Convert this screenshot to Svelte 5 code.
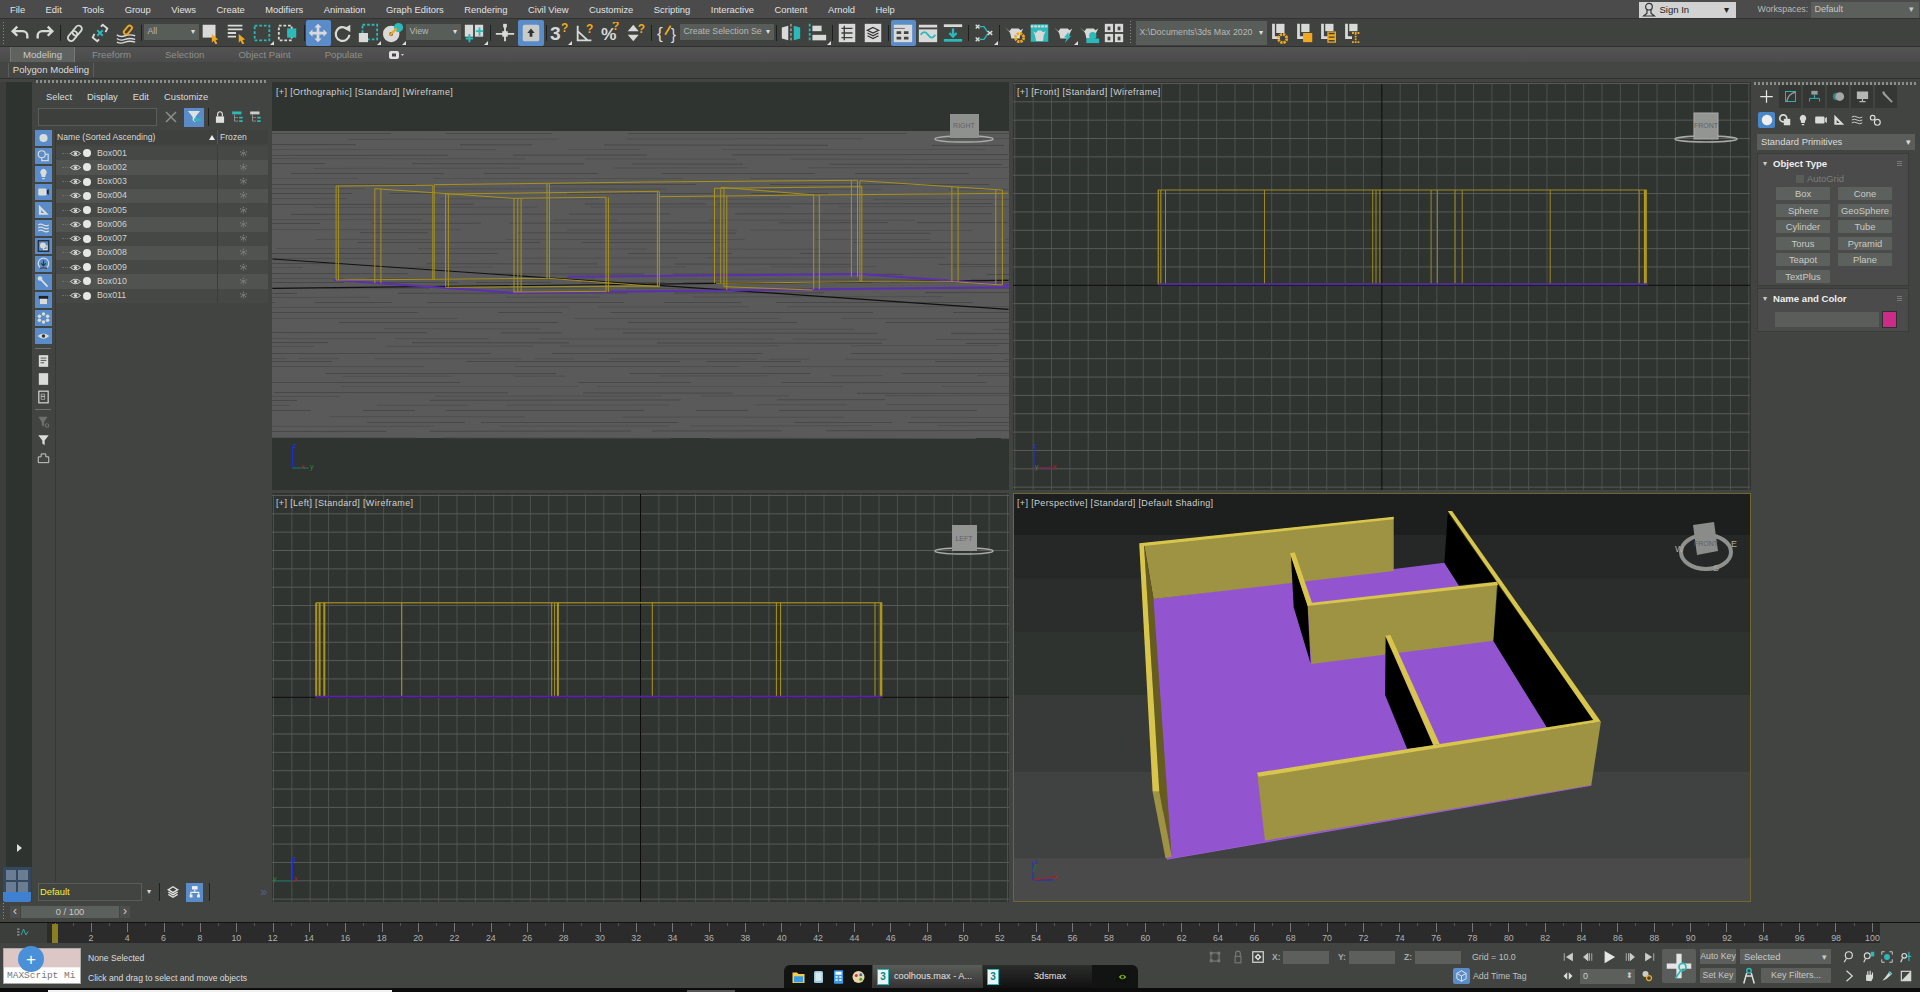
<script>
const L = '#d9d9d9', T = '#2bb9b9', O = '#f0a81e', D = '#414441';
const cursor = (x = 0, y = 0) => `<path transform="translate(${x} ${y})" d="M13 12l7 6-3 .5 2 4-2 1-2-4-2 2z" fill="${O}"/>`;
const q = (x, y) => `<text x="${x}" y="${y}" font-family="Liberation Sans" font-size="13" font-weight="700" fill="${O}">?</text>`;
const gear = (x, y) => `<circle cx="${x}" cy="${y}" r="4.500" fill="none" stroke="${O}" stroke-width="3" stroke-dasharray="2.500 1"/>`;
const potShape = `<path d="M1 6l5 4 2-3h8l2 2 3-2-3 6-1 5H8l-1-5-1-2z" fill="${L}"/>`;
const icons = {
  undo: `<path d="M9 5L4 10l5 5M4 10h11a5 5 0 0 1 5 5v3" fill="none" stroke="${L}" stroke-width="2.600"/>`,
  redo: `<path d="M15 5l5 5-5 5M20 10H9a5 5 0 0 0-5 5v3" fill="none" stroke="${L}" stroke-width="2.600"/>`,
  link: `<g fill="none" stroke="${L}" stroke-width="2"><rect x="11" y="3" width="7" height="12" rx="3.500" transform="rotate(40 14 9)"/><rect x="6" y="9" width="7" height="12" rx="3.500" transform="rotate(40 9 15)"/></g>`,
  unlink: `<g fill="none" stroke="${L}" stroke-width="2"><path d="M13 5l2-2 5 4-2 4M11 19l-2 2-5-4 2-4"/></g><path d="M9 9l6 6M15 9l-6 6" stroke="${T}" stroke-width="2"/>`,
  bind: `<path d="M2 14q4 3 9 1t11 0M2 18q4 3 9 1t11 0M2 22q4 2 9 0t11 0" fill="none" stroke="${L}" stroke-width="1.500"/><rect x="12" y="3" width="5" height="11" rx="2.500" transform="rotate(40 14 8)" fill="none" stroke="${O}" stroke-width="2"/>`,
  select: `<rect x="4" y="3" width="14" height="14" fill="${L}"/>${cursor(1, 1)}`,
  byname: `<path d="M3 4h16M3 8h16M3 12h9M3 16h9" stroke="${L}" stroke-width="2"/>${cursor(2, 1)}`,
  region: `<rect x="4" y="4" width="16" height="16" fill="none" stroke="${T}" stroke-width="2" stroke-dasharray="3 2"/>`,
  window: `<rect x="2" y="4" width="14" height="16" fill="none" stroke="${L}" stroke-width="2" stroke-dasharray="3 2"/><rect x="11" y="7" width="10" height="10" fill="${T}"/>`,
  move: `<path d="M12 2l4 4h-2.500v4.500H18V8l4 4-4 4v-2.500h-4.500V18H16l-4 4-4-4h2.500v-4.500H6V16l-4-4 4-4v2.500h4.500V6H8z" fill="${L}"/>`,
  rotate: `<path d="M17 8a7.500 7.500 0 1 0 2 6" fill="none" stroke="${L}" stroke-width="2.400"/><path d="M13 7l7-4v8z" fill="${L}"/>`,
  scale: `<rect x="6" y="3" width="16" height="16" fill="none" stroke="${T}" stroke-width="2" stroke-dasharray="3 2"/><rect x="2" y="12" width="10" height="10" fill="${L}"/>`,
  place: `<circle cx="10" cy="13" r="9" fill="${L}"/><circle cx="10" cy="13" r="2" fill="${D}"/><circle cx="18" cy="6" r="5" fill="${T}"/><path d="M8 15l8-8" stroke="${O}" stroke-width="2.500"/>`,
  pivot: `<rect x="2" y="3" width="9" height="13" fill="${L}"/><rect x="13" y="3" width="9" height="13" fill="${L}"/><path d="M7 13v9M3 18h8M18 6v9M14 10h8" stroke="${T}" stroke-width="2"/>`,
  manip: `<path d="M12 3v18M2 13h20" stroke="${L}" stroke-width="2"/><rect x="10" y="2" width="4" height="4" fill="${L}"/><rect x="9" y="10" width="6" height="6" fill="${L}"/>`,
  keymode: `<rect x="3" y="3" width="18" height="18" rx="2" fill="#c9cbc9"/><path d="M12 7l4 5h-2.500v4h-3v-4H8z" fill="#333"/>`,
  snap3: `<text x="1" y="20" font-family="Liberation Sans" font-size="21" font-weight="700" fill="${L}">3</text>${q(13, 11)}`,
  angle: `<path d="M4 4v16h15M4 10l11 10" fill="none" stroke="${L}" stroke-width="2"/>${q(13, 12)}`,
  percent: `<text x="1" y="20" font-family="Liberation Sans" font-size="19" font-weight="700" fill="${L}">%</text>${q(13, 9)}`,
  spin: `<path d="M9 3l6 7H3zM9 21l6-7H3z" fill="${L}"/>${q(14, 12)}`,
  braces: `<text x="1" y="19" font-family="Liberation Sans" font-size="19" fill="${L}">{</text><text x="16" y="20" font-family="Liberation Sans" font-size="17" fill="${L}">}</text><path d="M10 14l6-10" stroke="${O}" stroke-width="2"/>`,
  mirror: `<path d="M2 6l7-2v16l-7-2z" fill="${L}"/><path d="M22 6l-7-2v16l7-2z" fill="${T}"/><path d="M12 2v20" stroke="${L}" stroke-dasharray="3 2"/>`,
  align: `<path d="M4 2v20" stroke="${T}" stroke-width="2" stroke-dasharray="3 2"/><rect x="7" y="4" width="10" height="6" fill="${L}"/><rect x="7" y="14" width="15" height="6" fill="${L}"/>`,
  layer: `<rect x="3" y="2" width="18" height="20" fill="${L}"/><path d="M6 7h12M6 12h12M6 17h12M9 4v16" stroke="#3a3d3a" stroke-width="1.500"/>`,
  ribbon: `<rect x="3" y="2" width="18" height="20" fill="${L}"/><path d="M12 6l6 3-6 3-6-3zM6 12l6 3 6-3M6 15l6 3 6-3" fill="none" stroke="#333" stroke-width="1.500"/>`,
  curve: `<rect x="2" y="3" width="20" height="19" fill="${L}"/><path d="M2 7h12" stroke="#666"/><path d="M5 10h5v3H5zM13 10h5v3h-5zM5 16h5v3H5zM13 16h5v3h-5z" fill="#444"/>`,
  dope: `<rect x="2" y="3" width="20" height="19" fill="${L}"/><path d="M2 7h20" stroke="#444" stroke-width="2"/><path d="M4 14q4-6 8 0t8 0" fill="none" stroke="${T}" stroke-width="2"/>`,
  down: `<path d="M2 4h20" stroke="${L}" stroke-width="3"/><path d="M2 20h20" stroke="${T}" stroke-width="3"/><path d="M12 7v8M8 12l4 4 4-4" stroke="${T}" stroke-width="2.500" fill="none"/>`,
  schem: `<path d="M7 5h5l4 6M7 19h5l4-6" fill="none" stroke="${T}" stroke-width="1.500"/><path d="M3 3l4 4M7 3l-4 4M3 17l4 4M7 17l-4 4M16 10l5 4M21 10l-5 4" stroke="${L}" stroke-width="1.600"/>`,
  pot: `${potShape}${gear(17, 17)}`,
  potblue: `<rect x="2" y="2" width="20" height="20" fill="${T}"/><path d="M2 4.500h20" stroke="${L}" stroke-width="2.500" stroke-dasharray="3 1"/><path d="M5 10l3 2 2-3h4l2 2 3-1-2 4-1 7H8l-1-6z" fill="${L}"/>`,
  potz: `${potShape}<path d="M17 11l-5 6h3l-2 6 7-8h-3z" fill="${T}"/>`,
  pott: `${potShape}<path d="M8 18h14v5H8z" fill="${T}"/><circle cx="15" cy="15" r="4" fill="${T}"/>`,
  quad: `<g fill="${L}"><rect x="2" y="2" width="9" height="9"/><rect x="13" y="2" width="9" height="9"/><rect x="2" y="13" width="9" height="9"/><rect x="13" y="13" width="9" height="9"/></g><g fill="#444"><rect x="5" y="5" width="3" height="4"/><rect x="16" y="5" width="3" height="4"/><rect x="5" y="16" width="3" height="4"/><rect x="16" y="16" width="3" height="4"/></g>`,
  p1: `<path d="M6 2v15h7" fill="none" stroke="${L}" stroke-width="3"/><rect x="9" y="2" width="9" height="10" fill="${L}"/>${gear(16, 18)}`,
  p2: `<path d="M6 2v15h6" fill="none" stroke="${L}" stroke-width="3"/><rect x="9" y="2" width="9" height="9" fill="${L}"/><rect x="11" y="12" width="10" height="10" fill="${O}"/>`,
  p3: `<path d="M6 2v15h6" fill="none" stroke="${L}" stroke-width="3"/><rect x="9" y="2" width="9" height="8" fill="${L}"/><path d="M12 11h8v3h-8zM12 15h8v3h-8zM12 19h8v3h-8z" fill="none" stroke="${O}" stroke-width="1.500"/>`,
  p4: `<path d="M6 2v15h6" fill="none" stroke="${L}" stroke-width="3"/><rect x="9" y="2" width="9" height="8" fill="${L}"/><path d="M12 12h8M16 12v10M12 22h8" fill="none" stroke="${O}" stroke-width="2" stroke-dasharray="2 1"/>`
};
const tools = [
  ['undo', 25], ['redo', 25], ['sep', 5], ['link', 25], ['unlink', 25], ['bind', 27], ['sep', 4],
  ['combo', 55, 'All'], ['select', 23], ['byname', 29], ['region', 23, '', 1], ['window', 29], ['sep', 3],
  ['move', 25, '', 0, 1], ['rotate', 25], ['scale', 25, '', 1], ['place', 25, '', 1], ['combo', 55, 'View'],
  ['pivot', 27, '', 1], ['sep', 5], ['manip', 25], ['keymode', 26, '', 0, 1], ['sep', 5], ['snap3', 23, '', 1],
  ['angle', 27], ['percent', 25], ['spin', 25], ['sep', 5], ['braces', 26], ['combo', 94, 'Create Selection Se'],
  ['sep', 5], ['mirror', 25], ['align', 27, '', 1], ['sep', 4], ['layer', 25], ['ribbon', 27], ['sep', 4],
  ['curve', 25, '', 0, 1], ['dope', 25], ['down', 25], ['sep', 5], ['schem', 27, '', 1], ['sep', 3], ['pot', 28],
  ['potblue', 21], ['potz', 28, '', 1], ['pott', 25], ['quad', 23], ['grip', 10],
  ['combo', 131, 'X:\\Documents\\3ds Max 2020'], ['p1', 25], ['p2', 24], ['p3', 24], ['p4', 25]
];
const menus = ['File', 'Edit', 'Tools', 'Group', 'Views', 'Create', 'Modifiers', 'Animation', 'Graph Editors', 'Rendering', 'Civil View', 'Customize', 'Scripting', 'Interactive', 'Content', 'Arnold', 'Help'];
const tabs = ['Freeform', 'Selection', 'Object Paint', 'Populate'];
const boxes = Array.from({ length: 11 }, (_, i) => 'Box' + String(i + 1).padStart(3, '0'));

const E = '#d9dcd9';
const side = [
  `<circle cx="12" cy="12" r="7" fill="${E}"/>`,
  `<rect x="9" y="9" width="11" height="11" fill="none" stroke="${E}" stroke-width="2"/><circle cx="9" cy="9" r="6" fill="#5a8cca" stroke="${E}" stroke-width="2"/>`,
  `<path d="M12 3a6 6 0 0 1 4 10l-1 4H9l-1-4a6 6 0 0 1 4-10zM10 19h4v2h-4z" fill="${E}"/>`,
  `<rect x="3" y="6" width="14" height="12" rx="2" fill="${E}"/><path d="M18 9l3-2v10l-3-2z" fill="#222"/>`,
  `<path d="M4 3l17 17H4zM8 12v5h5z" fill="${E}" fill-rule="evenodd"/>`,
  `<path d="M3 7q4-3 9 0t9 0M3 12q4-3 9 0t9 0M3 17q4-3 9 0t9 0" stroke="${E}" stroke-width="2" fill="none"/>`,
  `<rect x="3" y="3" width="18" height="18" fill="none" stroke="#222" stroke-width="2"/><circle cx="11" cy="11" r="5" fill="${E}"/><rect x="12" y="12" width="6" height="6" fill="none" stroke="${E}" stroke-width="2"/>`,
  `<circle cx="12" cy="11" r="9" fill="none" stroke="${E}" stroke-width="2"/><path d="M12 6v8M8 11l4 4 4-4" stroke="#143" stroke-width="2" fill="none"/><path d="M6 19h12" stroke="#222" stroke-width="2"/>`,
  `<path d="M5 5l14 15" stroke="${E}" stroke-width="3"/><circle cx="6" cy="6" r="4" fill="${E}"/>`,
  `<rect x="4" y="5" width="16" height="5" fill="#222"/><rect x="6" y="10" width="12" height="9" fill="${E}"/>`,
  `<g fill="${E}"><circle cx="12" cy="5" r="3"/><circle cx="12" cy="19" r="3"/><circle cx="5" cy="9" r="3"/><circle cx="19" cy="9" r="3"/><circle cx="5" cy="16" r="3"/><circle cx="19" cy="16" r="3"/></g>`,
  `<path d="M2 12q10-9 20 0q-10 9-20 0z" fill="${E}"/><circle cx="12" cy="12" r="3" fill="#333"/>`
];
const sidePlain = [
  `<rect x="4" y="2" width="16" height="20" fill="${E}"/><path d="M7 7h10M7 11h10M7 15h6" stroke="#444" stroke-width="1.500"/>`,
  `<rect x="4" y="2" width="16" height="20" fill="${E}"/>`,
  `<rect x="4" y="2" width="16" height="20" fill="none" stroke="${E}" stroke-width="2"/><path d="M8 7h6v4H8zM8 11h6v5H8z" fill="none" stroke="${E}"/>`
];
const sideFilter = [
  `<path d="M3 3h16l-6 9v8l-4-3v-5z" fill="#6d716d"/><circle cx="18" cy="18" r="3" fill="none" stroke="#6d716d" stroke-width="2"/>`,
  `<path d="M3 4h18l-7 9v8l-4-3v-5z" fill="${E}"/>`,
  `<path d="M3 10h5V5h8v5h5v10H3z" fill="none" stroke="${E}" stroke-width="1.500"/>`
];
const cmdTabs = [
  `<path d="M12 2v20M2 12h20" stroke="#e8e8e8" stroke-width="2"/>`,
  `<rect x="4" y="4" width="16" height="16" fill="none" stroke="${T}" stroke-width="1.500"/><path d="M6 20Q8 8 20 5" fill="none" stroke="#9a9d9a" stroke-width="2"/>`,
  `<rect x="7" y="3" width="10" height="6" fill="#9a9d9a"/><path d="M4 20v-5h16v5M12 9v6" fill="none" stroke="${T}" stroke-width="1.500"/>`,
  `<circle cx="9" cy="12" r="6" fill="${T}" opacity=".6"/><circle cx="14" cy="12" r="7" fill="#a4a7a4"/>`,
  `<rect x="3" y="4" width="18" height="12" fill="#b4b7b4"/><path d="M12 16v3M7 20h10" stroke="#b4b7b4" stroke-width="2"/>`,
  `<path d="M5 5l3-2 2 4 12 13-2 2L7 9z" fill="#9a9d9a"/>`
];
const cmdSub = [
  `<circle cx="12" cy="12" r="9" fill="#eee"/>`,
  `<rect x="10" y="10" width="11" height="11" fill="${E}"/><circle cx="9" cy="9" r="6" fill="none" stroke="${E}" stroke-width="3"/>`,
  `<path d="M12 3a6 6 0 0 1 4 10l-1 4H9l-1-4a6 6 0 0 1 4-10zM10 19h4v2h-4z" fill="${E}"/>`,
  `<rect x="2" y="6" width="16" height="12" rx="2" fill="${E}"/><path d="M19 9l3-2v10l-3-2z" fill="${E}"/>`,
  `<path d="M4 3l17 17H4zM8 12v5h5z" fill="${E}" fill-rule="evenodd"/>`,
  `<path d="M3 7q4-3 9 0t9 0M3 12q4-3 9 0t9 0M3 17q4-3 9 0t9 0" stroke="${E}" stroke-width="1.500" fill="none"/>`,
  `<circle cx="8" cy="8" r="4" fill="none" stroke="${E}" stroke-width="2"/><circle cx="16" cy="16" r="5" fill="none" stroke="${E}" stroke-width="2"/>`
];
const primitives = ['Box', 'Cone', 'Sphere', 'GeoSphere', 'Cylinder', 'Tube', 'Torus', 'Pyramid', 'Teapot', 'Plane', 'TextPlus'];
const frames = Array.from({ length: 51 }, (_, i) => i * 2);
const frameTicks = Array.from({ length: 101 }, (_, i) => i);

function grid(cx, cy, x0, x1, y0, y1, s = 18.35) {
  const xs = [], ys = [];
  for (let v = cx % s + Math.floor((x0 - cx % s) / s) * s; v < x1; v += s) if (v >= x0 && Math.abs(v - cx) > 2) xs.push(v);
  for (let v = cy % s + Math.floor((y0 - cy % s) / s) * s; v < y1; v += s) if (v >= y0 && Math.abs(v - cy) > 2) ys.push(v);
  return { xs, ys };
}
const frontGrid = grid(1381.8, 285.3, 1013, 1751, 82, 490);
const leftGrid = grid(640.5, 697.3, 272, 1009, 493, 902);

const ox = (z) => +(270 + z / 2.119).toFixed(1), oy = (z) => +(80 + z / 3).toFixed(1);
const fx = (z) => +(1010 + z / 2.09).toFixed(1), fy = (z) => +(80 + z / 3).toFixed(1);
const py = (z) => +(490 + z / 3).toFixed(1);

const frontV = [310, 315, 325, 532, 758, 765, 773, 880, 893, 930, 945, 1129, 1315, 1327, 1330];
const leftV = [[98, 2], [105, 2], [115, 2], [279, 1], [597, 1], [603, 1], [610, 2], [810, 1], [1073, 1], [1082, 1], [1282, 1], [1295, 2.5]];

let seed = 7;
const rnd = () => ((seed = (seed * 16807) % 2147483647) / 2147483647);
const stripes = Array.from({ length: 62 }, (_, i) => ({
  y: Math.round(133 + i * 4.95 + rnd() * 2) + 0.5,
  dash: `${Math.round(40 + rnd() * 260)} ${Math.round(20 + rnd() * 120)} ${Math.round(60 + rnd() * 220)} ${Math.round(10 + rnd() * 90)}`,
  off: Math.round(rnd() * 300),
  tilt: Math.round(rnd() * 2 - 1),
  dark: i % 2 === 0
}));

const orthoV = [[140,319,600],[145,319,600],[222,326,610],[235,326,610],[345,316,600],[348,316,600],[372,342,620],[378,342,620],[517,355,636],[525,355,636],[532,355,636],[587,310,595],[592,310,595],[712,352,636],[717,352,636],[821,335,620],[825,335,620],[942,325,610],[955,325,610],[962,325,620],[968,348,630],[1152,345,628],[1164,345,628],[1232,302,590],[1245,302,590],[1250,302,605],[1254,320,605],[1445,320,605],[1458,320,605],[1538,330,615],[1552,330,615]];
const orthoL = [[140,318,345,316],[347,314,590,310],[590,310,800,306],[800,306,1245,301],[1250,302,1552,330],[372,342,825,334],[515,355,712,352],[825,350,1152,345],[942,325,1254,320],[955,322,1155,345],[1155,345,1565,340],[222,326,515,355],[140,600,590,595],[590,595,825,620],[372,622,825,618],[945,610,1250,605],[1250,605,1450,605],[1450,605,1552,615],[515,636,712,634],[962,620,1150,630]];
const orthoP = [[135,600,530,640],[530,638,1565,622],[630,590,1250,582],[1250,582,1565,615]];

const pts = (a) => a.map(([x, y]) => `${fx(x)},${py(y)}`).join(' ');
const persp = [
  { c: '#9355cf', p: [[298,327],[908,218],[1010,452],[1122,712],[1215,885],[535,1055],[328,1108],[325,1100]] },
  { c: '#9e9343', p: [[280,160],[802,82],[802,243],[300,327]] },
  { c: '#d8c64c', p: [[270,160],[802,80],[802,88],[280,168]] },
  { c: '#675c20', p: [[280,165],[300,327],[338,1100],[312,905]] },
  { c: '#d8c64c', p: [[270,160],[280,165],[312,905],[298,905]] },
  { c: '#9e9343', p: [[298,905],[312,905],[338,1100],[325,1105]] },
  { c: '#000', p: [[915,70],[908,218],[938,285],[1016,275]] },
  { c: '#000', p: [[1020,285],[1010,452],[1122,712],[1220,690]] },
  { c: '#d8c64c', p: [[915,63],[924,63],[1235,695],[1220,692]] },
  { c: '#9e9343', p: [[622,347],[1018,283],[1010,452],[630,522]] },
  { c: '#000', p: [[587,195],[593,352],[628,520],[622,347]] },
  { c: '#d8c64c', p: [[585,190],[595,187],[632,342],[622,347]] },
  { c: '#d8c64c', p: [[622,340],[1018,275],[1020,285],[622,348]] },
  { c: '#000', p: [[785,440],[784,615],[830,776],[885,767]] },
  { c: '#d8c64c', p: [[785,437],[795,435],[898,762],[885,765]] },
  { c: '#9e9343', p: [[517,855],[1235,695],[1215,885],[533,1052]] },
  { c: '#d8c64c', p: [[516,848],[1220,690],[1235,695],[520,860]] }
];
const bands = [[10,135,'#1c1f1d'],[135,265,'#252826'],[265,425,'#2a2d2b'],[425,615,'#2f3330'],[615,845,'#373a38'],[845,1105,'#404241'],[1105,1240,'#4a4a4a']];

const navTop = [
  `<circle cx="10" cy="9" r="6" fill="none" stroke="${L}" stroke-width="2"/><path d="M6 14l-4 7" stroke="${L}" stroke-width="2"/>`,
  `<circle cx="9" cy="10" r="5" fill="none" stroke="${L}" stroke-width="2"/><path d="M6 15l-3 6" stroke="${L}" stroke-width="2"/><path d="M15 3h6v8h-6z" fill="${T}"/>`,
  `<path d="M3 8V3h5M21 8V3h-5M3 16v5h5M21 16v5h-5" fill="none" stroke="${L}" stroke-width="1.500"/><circle cx="12" cy="12" r="5" fill="${T}"/>`,
  `<circle cx="9" cy="10" r="4" fill="none" stroke="${L}" stroke-width="2"/><path d="M17 3v16M13 11h8" stroke="${T}" stroke-width="2"/><path d="M6 14l-3 7" stroke="${L}" stroke-width="2"/>`
];
const navBot = [
  `<path d="M6 3l10 9-10 9" fill="none" stroke="${L}" stroke-width="2"/>`,
  `<path d="M7 20V10h2V4h2v6h2V3h2v7h2V6h2v9l-3 6z" fill="${L}"/>`,
  `<path d="M4 20l5-6 8-10 4 4-10 9z" fill="${L}"/><path d="M15 5l4 4" stroke="${T}" stroke-width="3"/>`,
  `<rect x="4" y="4" width="16" height="16" fill="none" stroke="${L}" stroke-width="2"/><path d="M4 20L20 4v16z" fill="${L}"/>`
];
</script>

<div class="app">
  <header class="menubar">
    <nav class="menus">
      {#each menus as m}<span>{m}</span>{/each}
    </nav>
    <div class="signin">
      <svg viewBox="0 0 24 24" class="i16"><circle cx="12" cy="7" r="5" fill="none" stroke="#333" stroke-width="1.800"/><path d="M9 12v5l-5 4h16l-5-4v-5" fill="none" stroke="#333" stroke-width="1.800"/></svg>
      <span>Sign In</span><i>▾</i>
    </div>
    <span class="ws-label">Workspaces:</span>
    <div class="ws-combo"><span>Default</span><i>▾</i></div>
  </header>

  <div class="toolbar">
    <div class="toolgrip"></div>
    {#each tools as [name, w, label, corner, active]}
      {#if name === 'sep'}
        <div class="tsep" style:width="{w}px"><b></b></div>
      {:else if name === 'grip'}
        <div class="tgrip" style:width="{w}px"><b></b></div>
      {:else if name === 'combo'}
        <div class="tcombo" class:bright={w > 100} style:width="{w}px"><span>{label}</span><i>▾</i></div>
      {:else}
        <div class="tool" class:active style:width="{w}px">
          <svg viewBox="0 0 24 24">{@html icons[name]}</svg>
          {#if corner}<em></em>{/if}
        </div>
      {/if}
    {/each}
  </div>

  <div class="tabs">
    <span class="tab on">Modeling</span>
    {#each tabs as t}<span class="tab">{t}</span>{/each}
    <svg class="tabicon" viewBox="0 0 16 10"><rect x="1" y="1" width="10" height="8" rx="2" fill="#e0e0e0"/><rect x="4" y="3.500" width="4" height="3" fill="#444"/><path d="M13 4l1.500 2L16 4z" fill="#ccc"/></svg>
  </div>
  <div class="panelrow"><span class="polytab">Polygon Modeling</span></div>

  <main class="main">
    <aside class="leftstrip">
      <div class="dark">
        <span class="arrowbtn"></span>
      </div>
      <div class="layoutbtn">
        <b></b><b></b><b></b><b></b>
      </div>
    </aside>

    <section class="explorer">
      <div class="hgrip"></div>
      <div class="exmenu"><span>Select</span><span>Display</span><span>Edit</span><span>Customize</span></div>
      <div class="exsearch">
        <div class="search"></div>
        <svg class="i14 x" viewBox="0 0 14 14"><path d="M2 2l10 10M12 2L2 12" stroke="#8a8d8a" stroke-width="1.600"/></svg>
        <div class="filter"><svg viewBox="0 0 24 24"><path d="M3 3h18l-7 9v8l-4-3v-5z" fill="#dfe3df"/><path d="M12 16h10" stroke="#2bb9b9" stroke-width="4"/></svg></div>
        <span class="vsep"></span>
        <svg class="i14" viewBox="0 0 24 24"><rect x="5" y="11" width="14" height="11" fill="#e0e0e0"/><path d="M8 11V7a4 4 0 0 1 8 0v4" fill="none" stroke="#e0e0e0" stroke-width="2"/></svg>
        <svg class="i14" viewBox="0 0 24 24"><path d="M2 5h16" stroke="#2bb9b9" stroke-width="5"/><path d="M6 8v11h6M6 13h6" fill="none" stroke="#bbb"/><path d="M14 13h6M14 19h6" stroke="#2bb9b9" stroke-width="3"/></svg>
        <svg class="i14" viewBox="0 0 24 24"><path d="M2 5h16" stroke="#ccc" stroke-width="5"/><path d="M6 8v11h6M6 13h6" fill="none" stroke="#bbb"/><path d="M14 13h6M14 19h6" stroke="#2bb9b9" stroke-width="3"/></svg>
      </div>
      <div class="exbody">
        <div class="excol">
          {#each side as s}<div class="sbtn"><svg viewBox="0 0 24 24">{@html s}</svg></div>{/each}
          <hr />
          {#each sidePlain as s}<div class="sbtn plain"><svg viewBox="0 0 24 24">{@html s}</svg></div>{/each}
          <hr />
          {#each sideFilter as s}<div class="sbtn plain"><svg viewBox="0 0 24 24">{@html s}</svg></div>{/each}
        </div>
        <div class="extree">
          <div class="exhead">
            <span class="cname">Name (Sorted Ascending)</span><i class="sorti"></i><span class="cfrozen">Frozen</span>
          </div>
          {#each boxes as b}
            <div class="exrow">
              <span class="twig"></span>
              <svg class="eye" viewBox="0 0 24 14"><path d="M1 7q11-10 22 0q-11 10-22 0z" fill="none" stroke="#ddd" stroke-width="2"/><circle cx="12" cy="7" r="3.500" fill="#ddd"/></svg>
              <span class="dot"></span>
              <span class="bname">{b}</span>
              <span class="flake"><svg viewBox="0 0 24 24"><path d="M12 2v20M3 7l18 10M21 7L3 17" stroke="#7a7d7a" stroke-width="3.500" stroke-dasharray="3 2"/></svg></span>
            </div>
          {/each}
        </div>
      </div>
      <div class="exfoot">
        <div class="layerbox">Default</div>
        <i class="layerarrow">▾</i>
        <span class="vsep"></span>
        <svg class="i14" viewBox="0 0 24 24"><path d="M12 3l8 5-8 5-8-5zM4 12l8 5 8-5M4 16l8 5 8-5" fill="none" stroke="#e0e0e0" stroke-width="2.400"/></svg>
        <div class="layerblue"><svg viewBox="0 0 24 24"><rect x="7" y="2" width="10" height="6" fill="#eee"/><path d="M12 8v5M5 20v-7h14v7" fill="none" stroke="#eee" stroke-width="2"/><rect x="3" y="17" width="5" height="5" fill="#eee"/><rect x="16" y="17" width="5" height="5" fill="#eee"/></svg></div>
        <span class="vsep"></span>
        <span class="chev">»</span>
      </div>
    </section>

    <section class="views">
      <div class="vp">
        <svg viewBox="272 82 737 408">
          <rect x="272" y="131" width="737" height="307" fill="#5a5a5a"/>
          {#each stripes as s}
            <line x1="272" x2="1009" y1={s.y} y2={s.y + s.tilt} stroke={s.dark ? '#484848' : '#4f4f4f'} stroke-width="1" stroke-dasharray={s.dash} stroke-dashoffset={s.off}/>
          {/each}
          <line x1={ox(5)} y1={oy(537)} x2={ox(1565)} y2={oy(688)} stroke="#111" stroke-width="1.200"/>
          <line x1={ox(5)} y1={oy(625)} x2={ox(1565)} y2={oy(601)} stroke="#111" stroke-width="1.200"/>
          {#each orthoP as [a, b, c, d]}
            <line x1={ox(a)} y1={oy(b)} x2={ox(c)} y2={oy(d)} stroke="#5b2fb0" stroke-width="2"/>
          {/each}
          {#each orthoV as [x, a, b]}
            <line x1={ox(x)} y1={oy(a)} x2={ox(x)} y2={oy(b)} stroke="#a8921c" stroke-width="1"/>
          {/each}
          {#each orthoL as [a, b, c, d]}
            <line x1={ox(a)} y1={oy(b)} x2={ox(c)} y2={oy(d)} stroke="#a8921c" stroke-width="1"/>
          {/each}
          <ellipse cx="964" cy="139" rx="29" ry="3" fill="none" stroke="#a8aaa8" stroke-width="1.500"/>
          <rect x="950" y="114" width="29" height="24" fill="#8f918f"/>
          <text x="964" y="128" class="cube">RIGHT</text>
          <path d="M292.500 446v22h16" fill="none" stroke="#1c2ccc"/><path d="M292.500 468h16" stroke="#1a801a"/>
          <text x="293" y="448" class="ax" fill="#2233cc">z</text><text x="301" y="469" class="ax" fill="#b02020">x</text><text x="310" y="469" class="ax" fill="#2a8a2a">y</text>
        </svg>
        <p class="vlabel">[+] [Orthographic] [Standard] [Wireframe]</p>
      </div>

      <div class="vp">
        <svg viewBox="1013 82 738 408">
          {#each frontGrid.xs as x}<line x1={x} x2={x} y1="84" y2="490" class="gv"/>{/each}
          {#each frontGrid.ys as y}<line y1={y} y2={y} x1="1013" x2="1750" class="g"/>{/each}
          <line x1="1381.800" x2="1381.800" y1="84" y2="490" stroke="#0c0c0c"/>
          <line x1="1013" x2="1750" y1="285.300" y2="285.300" stroke="#0c0c0c"/>
          <rect x={fx(310)} y={fy(330)} width={fx(1330) - fx(310)} height={fy(613) - fy(330)} fill="none" stroke="#9c8a1e"/>
          {#each frontV as x}<line x1={fx(x)} x2={fx(x)} y1={fy(330)} y2={fy(613)} stroke="#9c8a1e"/>{/each}
          <line x1={fx(1327)} x2={fx(1327)} y1={fy(330)} y2={fy(613)} stroke="#b39c1c" stroke-width="2"/>
          <line x1={fx(310)} x2={fx(1333)} y1={fy(613)} y2={fy(613)} stroke="#4d2c98" stroke-width="2"/>
          <ellipse cx="1706" cy="139" rx="31" ry="3" fill="none" stroke="#a8aaa8" stroke-width="1.500"/>
          <rect x="1694" y="113" width="24" height="26" fill="#939593" stroke="#aaa"/>
          <text x="1706" y="128" class="cube">FRONT</text>
          <path d="M1034 446v22h20" fill="none" stroke="#1c2ccc"/><path d="M1034 468h20" stroke="#b02020"/>
          <text x="1033" y="448" class="ax" fill="#2233cc">z</text><text x="1035" y="469" class="ax" fill="#2a8a2a">y</text><text x="1053" y="469" class="ax" fill="#b02020">x</text>
        </svg>
        <p class="vlabel">[+] [Front] [Standard] [Wireframe]</p>
      </div>

      <div class="vp">
        <svg viewBox="272 493 737 409">
          {#each leftGrid.xs as x}<line x1={x} x2={x} y1="494" y2="902" class="gv"/>{/each}
          {#each leftGrid.ys as y}<line y1={y} y2={y} x1="272" x2="1009" class="g"/>{/each}
          <line x1="640.500" x2="640.500" y1="494" y2="902" stroke="#0c0c0c"/>
          <line x1="272" x2="1009" y1="697.300" y2="697.300" stroke="#0c0c0c"/>
          <line x1={ox(98)} x2={ox(1297)} y1={py(338)} y2={py(338)} stroke="#8f7f1c" stroke-width="1.500"/>
          {#each leftV as [x, w]}<line x1={ox(x)} x2={ox(x)} y1={py(338)} y2={py(620)} stroke="#ab961c" stroke-width={w}/>{/each}
          <line x1={ox(96)} x2={ox(1297)} y1={py(620)} y2={py(620)} stroke="#55259c" stroke-width="2"/>
          <ellipse cx="964" cy="551" rx="29" ry="3" fill="none" stroke="#a8aaa8" stroke-width="1.500"/>
          <rect x="952" y="525" width="25" height="26" fill="#939593"/>
          <text x="964" y="541" class="cube">LEFT</text>
          <path d="M292.500 858v23h-17" fill="none" stroke="#1c2ccc"/><path d="M292.500 881h-17" stroke="#1a801a"/><path d="M292.500 881h3" stroke="#b02020"/>
          <text x="293" y="861" class="ax" fill="#2233cc">z</text><text x="273" y="881" class="ax" fill="#2a8a2a">y</text><text x="294" y="881" class="ax" fill="#b02020">x</text>
        </svg>
        <p class="vlabel">[+] [Left] [Standard] [Wireframe]</p>
      </div>

      <div class="vp active">
        <svg viewBox="1013 493 738 409">
          {#each bands as [a, b, c]}
            <rect x="1013" y={py(a)} width="738" height={py(b) - py(a) + 1} fill={c}/>
          {/each}
          <line x1={fx(328)} y1={py(1107)} x2={fx(1215)} y2={py(885)} stroke="#a060e0" stroke-width="1.500"/>
          {#each persp as f}<polygon points={pts(f.p)} fill={f.c}/>{/each}
          <ellipse cx="1706" cy="552" rx="25" ry="17" fill="none" stroke="#8e918e" stroke-width="4"/>
          <polygon points="1693,525 1714,522 1718,551 1697,555" fill="#8a8c8a"/>
          <text x="1706" y="546" class="cube">FRONT</text>
          <text x="1675" y="552" class="nsew">W</text><text x="1731" y="547" class="nsew">E</text><text x="1713" y="571" class="nsew">S</text>
          <path d="M1033 862v18h20" fill="none" stroke="#1c2ccc"/><path d="M1033 880l22-3" stroke="#b02020"/><path d="M1033 872l3-8" stroke="#1a801a"/>
          <text x="1034" y="864" class="ax" fill="#2233cc">z</text><text x="1054" y="879" class="ax" fill="#b02020">x</text>
        </svg>
        <p class="vlabel">[+] [Perspective] [Standard] [Default Shading]</p>
      </div>
    </section>

    <aside class="command">
      <div class="hgrip right"></div>
      <div class="ctabs">
        {#each cmdTabs as c, i}<div class="ctab" class:on={i === 0}><svg viewBox="0 0 24 24">{@html c}</svg></div>{/each}
      </div>
      <div class="csub">
        {#each cmdSub as c, i}<div class="cs" class:on={i === 0}><svg viewBox="0 0 24 24">{@html c}</svg></div>{/each}
      </div>
      <div class="cdrop"><span>Standard Primitives</span><i>▾</i></div>
      <div class="roll otype">
        <div class="rhead"><i>▾</i><strong>Object Type</strong><u></u></div>
        <div class="autogrid"><b></b><span>AutoGrid</span></div>
        <div class="pgrid">
          {#each primitives as p}<button>{p}</button>{/each}
        </div>
      </div>
      <div class="roll ncolor">
        <div class="rhead"><i>▾</i><strong>Name and Color</strong><u></u></div>
        <div class="nrow"><div class="nameinput"></div><div class="swatch"></div></div>
      </div>
    </aside>
  </main>

  <div class="trackrow">
    <span class="tgripv"></span>
    <span class="tbtn">‹</span>
    <span class="tslider">0 / 100</span>
    <span class="tbtn">›</span>
  </div>

  <div class="timeline">
    <div class="tlicon">
      <svg viewBox="0 0 24 16"><path d="M2 3h4M2 8h4M2 13h4" stroke="#ccc" stroke-width="1.500"/><path d="M9 13l4-10 4 10 4-6" fill="none" stroke="#2bb9b9" stroke-width="1.500"/></svg>
    </div>
    <div class="tlbar">
      <div class="ticks">
        {#each frameTicks as f}<span class="tick" class:big={f % 2 === 0}></span>{/each}
      </div>
      <div class="labels">
        {#each frames as f}<span>{f}</span>{/each}
      </div>
      <span class="thumb"></span>
    </div>
  </div>

  <footer class="status">
    <div class="mini">
      <div class="pink"></div>
      <div class="white">MAXScript Mi</div>
    </div>
    <div class="msgs"><span>None Selected</span><span>Click and drag to select and move objects</span></div>

    <div class="coords">
      <div class="crow">
        <svg class="i16" viewBox="0 0 24 24"><rect x="5" y="5" width="14" height="14" fill="none" stroke="#777" stroke-width="2"/><path d="M3 3h5v5H3zM16 3h5v5h-5zM3 16h5v5H3zM16 16h5v5h-5z" fill="#777"/></svg>
        <svg class="i16 gap1" viewBox="0 0 24 24"><rect x="7" y="11" width="10" height="11" fill="none" stroke="#777" stroke-width="2"/><path d="M8 11V6a4 4 0 0 1 8 0v5" fill="none" stroke="#777" stroke-width="2"/></svg>
        <svg class="i16 gap2" viewBox="0 0 24 24"><rect x="3" y="3" width="18" height="18" fill="none" stroke="#ddd" stroke-width="2"/><path d="M12 6l6 6-6 6-6-6z" fill="#ddd"/><circle cx="12" cy="12" r="2" fill="#444"/></svg>
        <span class="axl">X:</span><span class="cinput"></span>
        <span class="axl">Y:</span><span class="cinput"></span>
        <span class="axl">Z:</span><span class="cinput"></span>
        <span class="gridv">Grid = 10.0</span>
      </div>
      <div class="crow tag">
        <div class="tagbtn"><svg viewBox="0 0 24 24"><path d="M12 3l8 4.500v9L12 21l-8-4.500v-9zM4 7.500l8 4.500 8-4.500M12 12v9" fill="none" stroke="#e8e8e8" stroke-width="1.600"/></svg></div>
        <span>Add Time Tag</span>
      </div>
    </div>

    <div class="play">
      <div class="prow">
        <svg viewBox="0 0 16 14"><path d="M3 2v10M14 2L6 7l8 5z" stroke="#ccc" fill="#ccc"/></svg>
        <svg viewBox="0 0 16 14"><path d="M8 2L2 7l6 5zM10 2v10M13 2v10" stroke="#ccc" fill="#ccc"/></svg>
        <svg class="big" viewBox="0 0 16 16"><path d="M3 1l12 7-12 7z" fill="#e6e6e6"/></svg>
        <svg viewBox="0 0 16 14"><path d="M8 2l6 5-6 5zM3 2v10M6 2v10" stroke="#ccc" fill="#ccc"/></svg>
        <svg viewBox="0 0 16 14"><path d="M13 2v10M2 2l8 5-8 5z" stroke="#ccc" fill="#ccc"/></svg>
      </div>
      <div class="prow low">
        <svg viewBox="0 0 16 14"><path d="M7 2L2 7l5 5zM9 2l5 5-5 5z" fill="#ddd"/></svg>
        <div class="spin"><span>0</span><i>⬍</i></div>
        <svg viewBox="0 0 24 24"><circle cx="9" cy="8" r="6" fill="#ccc"/><circle cx="16" cy="16" r="5" fill="none" stroke="#f0a81e" stroke-width="2.500"/></svg>
      </div>
    </div>

    <div class="keybig"><svg viewBox="0 0 32 32"><path d="M13 2h6v11h11v6H19v11h-6V19H2v-6h11z" fill="#e5e5e5"/><circle cx="20" cy="17" r="4" fill="none" stroke="#2bb9b9" stroke-width="2"/><path d="M18 21l-6 9" stroke="#2bb9b9" stroke-width="2"/></svg></div>

    <div class="keys">
      <div class="krow"><button class="kb">Auto Key</button><div class="kdrop"><span>Selected</span><i>▾</i></div></div>
      <div class="krow"><button class="kb">Set Key</button>
        <svg class="i18" viewBox="0 0 24 24"><circle cx="12" cy="5" r="3" fill="none" stroke="#2bb9b9" stroke-width="2"/><path d="M9 8l-4 14M15 8l4 14M7 12h10" fill="none" stroke="#ddd" stroke-width="2"/></svg>
        <button class="kf">Key Filters...</button>
      </div>
    </div>

    <div class="nav">
      {#each navTop as n}<svg viewBox="0 0 24 24">{@html n}</svg>{/each}
      {#each navBot as n}<svg viewBox="0 0 24 24">{@html n}</svg>{/each}
    </div>
  </footer>

  <div class="winbar"><span class="w1"></span><span class="w2"></span></div>

  <button class="fab" aria-label="Add">+</button>

  <div class="taskbar">
    <svg viewBox="0 0 20 20"><path d="M2 4h6l2 2h8v12H2z" fill="#f5cd4c"/><rect x="4" y="9" width="12" height="8" fill="#3c9ae0"/></svg>
    <svg viewBox="0 0 20 20"><rect x="4" y="2" width="12" height="16" rx="2" fill="#9ec9d8"/><rect x="6" y="4" width="8" height="11" fill="#d6e9ef"/></svg>
    <svg viewBox="0 0 20 20"><rect x="4" y="1" width="12" height="18" rx="1" fill="#3c9ae0"/><rect x="6" y="3" width="8" height="4" fill="#fff"/><path d="M6 9h3v2H6zM11 9h3v2h-3zM6 13h3v2H6zM11 13h3v2h-3z" fill="#fff"/></svg>
    <svg viewBox="0 0 20 20"><circle cx="10" cy="10" r="8" fill="#e8d6a8"/><circle cx="7" cy="8" r="2" fill="#c33"/><circle cx="13" cy="7" r="2" fill="#36b"/><circle cx="13" cy="13" r="2" fill="#3a3"/></svg>
    <div class="task on"><span class="three">3</span><span class="tname">coolhous.max - A...</span></div>
    <div class="task"><span class="three">3</span><span class="tname mid">3dsmax</span></div>
    <svg class="nv" viewBox="0 0 20 20"><rect x="2" y="2" width="16" height="16" fill="#111"/><path d="M5 10q5-6 10 0q-5 6-10 0z" fill="#76b900"/><circle cx="10" cy="10" r="2" fill="#111"/></svg>
  </div>
</div>

<style>
:global(body) { margin: 0; background: #414441; }
.app { position: relative; width: 1920px; height: 992px; overflow: hidden; background: #414441; color: #d6d8d6; font: 9px/1 "Liberation Sans", Arial, sans-serif; display: flex; flex-direction: column; }
svg { display: block; }
i { font-style: normal; }
button { font: inherit; border: 0; padding: 0; }

.menubar { height: 18px; background: #4a4b4a; display: flex; align-items: center; box-sizing: border-box; padding-top: 1px; }
.menus { display: flex; gap: 20.500px; padding-left: 10px; flex: 0 0 1638.500px; box-sizing: border-box; color: #e2e2e2; font-size: 9.400px; }
.signin { width: 97px; height: 16px; background: #d2d2d2; color: #222; display: flex; align-items: center; gap: 3px; box-sizing: border-box; padding-left: 2px; font-size: 9.500px; }
.signin i { margin-left: auto; margin-right: 7px; color: #222; }
.ws-label { margin-left: 22px; color: #b8bbb8; width: 53px; flex: none; font-size: 8.800px; white-space: nowrap; }
.ws-combo { width: 108px; height: 16px; background: #5c605c; display: flex; align-items: center; justify-content: space-between; padding: 0 5px 0 4px; box-sizing: border-box; color: #c6c8c6; }
.i16 { width: 16px; height: 16px; flex: none; }
.i14 { width: 14px; height: 14px; flex: none; }
.i18 { width: 18px; height: 18px; flex: none; }

.toolbar { height: 28px; background: #3f423f; display: flex; align-items: center; border-top: 1px solid #333; box-sizing: border-box; }
.toolgrip { width: 7.500px; height: 22px; background: repeating-linear-gradient(#8a8d8a 0 1px, transparent 1px 3px) 3px 0/1px 100% no-repeat; flex: none; }
.tool { position: relative; height: 26px; display: flex; align-items: center; justify-content: center; flex: none; box-sizing: border-box; }
.tool svg { width: 22px; height: 22px; }
.tool.active { background: #5a8cca; border-radius: 2px; }
.tool em { position: absolute; right: 0; bottom: 1px; width: 0; height: 0; border-left: 4px solid transparent; border-bottom: 4px solid #ddd; }
.tsep, .tgrip { height: 24px; display: flex; justify-content: center; flex: none; }
.tsep b { width: 1px; height: 16px; margin-top: 4px; background: #1e201e; }
.tgrip b { width: 1px; background: repeating-linear-gradient(#8a8d8a 0 1px, transparent 1px 3px); }
.tcombo { height: 16px; background: #595d59; color: #b6b9b6; display: flex; align-items: center; justify-content: space-between; padding: 0 4px; box-sizing: border-box; flex: none; white-space: nowrap; margin-top: -2px; gap: 2px; font-size: 8.800px; }
.tcombo.bright { height: 24px; margin-top: 0; }
.tcombo i { color: #ddd; font-size: 8px; }

.tabs { height: 16px; background: linear-gradient(#525352, #4a4b4a); display: flex; align-items: center; padding-left: 10px; border-top: 1px solid #2e2f2e; box-sizing: border-box; color: #8d908d; font-size: 9.600px; gap: 34px; }
.tab { flex: none; white-space: nowrap; }
.tab.on { width: 65px; height: 15px; line-height: 15px; text-align: center; background: #5f625f; color: #c8cac8; border-left: 1px solid #777; border-right: 1px solid #777; margin-right: -17px; box-sizing: border-box; }
.tabicon { width: 16px; height: 10px; margin-left: -9px; }
.panelrow { height: 15px; background: #434643; padding: 1px 0 0 8px; border-bottom: 1px solid #2f322f; box-sizing: content-box; }
.polytab { display: block; width: 86px; height: 14px; line-height: 14px; text-align: center; color: #dcdcdc; border: 1px solid #5a5d5a; border-top: 0; border-bottom: 0; box-sizing: border-box; font-size: 9.600px; }

.main { height: 820px; display: flex; flex: none; background: #414441; margin-top: 3px; }
.leftstrip { width: 32px; flex: none; display: flex; flex-direction: column; padding-left: 3px; box-sizing: border-box; background: #3b3e3b; }
.dark { height: 785px; margin-left: 3px; width: 26px; background: #2f3330; display: flex; flex-direction: column; justify-content: flex-end; align-items: center; padding-bottom: 15px; box-sizing: border-box; }
.arrowbtn { width: 0; height: 0; border-left: 5px solid #ddd; border-top: 4px solid transparent; border-bottom: 4px solid transparent; }
.layoutbtn { width: 28px; height: 35px; background: linear-gradient(#34495f 0 72%, #3f80d0 72%); border-radius: 2px; display: grid; grid-template-columns: 1fr 1fr; grid-template-rows: 1fr 1fr; gap: 2px; padding: 3px 3px 10px; box-sizing: border-box; }
.layoutbtn b { background: #6a7d92; }

.explorer { width: 238px; flex: none; margin-right: 2px; display: flex; flex-direction: column; padding: 0 3px; box-sizing: border-box; }
.hgrip { height: 3px; margin: -2px 0 0 1px; background: repeating-linear-gradient(90deg, #8a8d8a 0 2px, transparent 2px 4px); }
.hgrip.right { margin: 0; }
.exmenu { display: flex; gap: 15px; padding: 9px 0 0 11px; height: 18px; box-sizing: border-box; color: #dcdcdc; font-size: 9.400px; }
.exsearch { display: flex; align-items: center; height: 20px; margin-top: 6px; gap: 4px; }
.search { width: 119px; height: 18px; margin-left: 3px; border: 1px solid #5a5d5a; box-sizing: border-box; background: #3c3f3c; }
.x { margin: 0 2px 0 3px; }
.filter { width: 20px; height: 19px; background: #5a8cca; padding: 1px 2px; box-sizing: border-box; }
.vsep { width: 1px; height: 18px; background: #1e201e; flex: none; }
.exbody { flex: 1; display: flex; margin-top: 3px; min-height: 0; }
.excol { width: 20px; flex: none; display: flex; flex-direction: column; align-items: flex-start; }
.sbtn { width: 17px; height: 16px; background: #5a8cca; margin-bottom: 2px; flex: none; padding: 1px; box-sizing: border-box; }
.sbtn svg { width: 15px; height: 14px; }
.sbtn.plain { background: transparent; }
hr { width: 16px; margin: 2px 0 4px; border: 0; border-top: 1px solid #6c6f6c; }
.extree { flex: 1; border-left: 1px solid #363936; box-sizing: border-box; }
.exhead { height: 14px; display: flex; align-items: center; background: #3e413e; margin-bottom: 2px; font-size: 8.600px; }
.cname { width: 152px; padding-left: 1px; white-space: nowrap; flex: none; }
.sorti { width: 0; height: 0; border-left: 3px solid transparent; border-right: 3px solid transparent; border-bottom: 5px solid #eee; margin-right: 2px; flex: none; }
.cfrozen { padding-left: 2px; border-left: 1px solid #555; height: 14px; line-height: 14px; flex: 1; }
.exrow { height: 14.250px; display: flex; align-items: center; position: relative; background: #454845; }
.exrow:nth-of-type(odd) { background: #515351; }
.twig { width: 8px; margin-left: 6px; border-bottom: 1px dotted #6a6d6a; flex: none; }
.eye { width: 11px; height: 7px; flex: none; }
.dot { width: 8px; height: 8px; border-radius: 50%; background: #e6e6e6; margin: 0 4px 0 2px; flex: none; }
.bname { width: 120px; padding-left: 2px; color: #d0d2d0; font-size: 8.800px; flex: none; }
.flake { width: 50px; display: flex; justify-content: center; border-left: 1px solid #3a3d3a; height: 100%; align-items: center; flex: none; }
.flake svg { width: 9px; height: 9px; }
.exfoot { height: 20px; display: flex; align-items: center; gap: 6px; padding-left: 3px; }
.layerbox { width: 115px; height: 18px; line-height: 16px; padding-left: 1px; color: #f0f030; border: 1px solid #5a5d5a; box-sizing: border-box; font-size: 9.400px; }
.layerarrow { font-size: 8px; margin-left: -1px; width: 6px; }
.layerblue { width: 19px; height: 19px; background: #5a8cca; padding: 2px; box-sizing: border-box; }
.chev { color: #5a5f88; margin-left: 44px; font-size: 12px; }

.views { width: 1479px; flex: none; display: grid; grid-template-columns: 737px 738px; grid-template-rows: 408px 409px; column-gap: 4px; row-gap: 3px; background: #414441; }
.vp { position: relative; background: #303431; overflow: hidden; }
.vp.active { outline: 1px solid #6f6730; outline-offset: -1px; }
.vp svg { width: 100%; height: 100%; }
.vlabel { position: absolute; left: 4px; top: 6px; margin: 0; color: #cfd1cf; white-space: nowrap; font-size: 9px; letter-spacing: .35px; }
.g { stroke: #585b58; stroke-width: 1; }
.gv { stroke: #4d504d; stroke-width: 1; }
.cube { font: 7px "Liberation Sans", sans-serif; fill: #5f6166; text-anchor: middle; }
.ax { font: 7px "Liberation Sans", sans-serif; }
.nsew { font: 9px "Liberation Sans", sans-serif; fill: #a8aba8; }

.command { flex: 1; padding: 0 3px; box-sizing: border-box; }
.ctabs { display: flex; gap: 2px; padding-left: 1px; }
.ctab { width: 22px; height: 23px; background: #343734; display: flex; align-items: center; justify-content: center; border-radius: 2px 2px 0 0; flex: none; }
.ctab.on { background: #414441; }
.ctab svg { width: 15px; height: 15px; }
.csub { display: flex; gap: 1px; height: 19px; margin-top: 2px; padding-left: 4px; }
.cs { width: 17px; height: 16px; display: flex; align-items: center; justify-content: center; flex: none; border-radius: 2px; margin-top: 2px; }
.cs.on { background: #4a86c8; }
.cs svg { width: 14px; height: 14px; }
.cdrop { height: 16px; margin: 5px 0 0 3px; width: 158px; background: #5a5d5a; display: flex; align-items: center; justify-content: space-between; padding: 0 4px; box-sizing: border-box; color: #dcdcdc; font-size: 9.400px; }
.roll { margin: 3px 0 0 3px; width: 152px; background: #4a4b4a; border: 1px solid #3a3c3a; box-sizing: border-box; }
.otype { height: 133px; }
.ncolor { height: 44px; margin-top: 2px; }
.rhead { display: flex; align-items: center; height: 15px; padding: 2px 0 0 5px; gap: 6px; color: #eee; }
.rhead i { font-size: 8px; color: #ccc; }
.rhead strong { font-size: 9.600px; flex: 1; }
.rhead u { width: 5px; height: 5px; margin-right: 6px; text-decoration: none; background: repeating-linear-gradient(#777 0 1px, transparent 1px 2px); }
.autogrid { display: flex; align-items: center; gap: 3px; padding-left: 38px; height: 14px; margin-top: 1px; color: #7c7f7c; font-size: 9.400px; }
.autogrid b { width: 8px; height: 8px; background: #5a5c5a; }
.pgrid { display: grid; grid-template-columns: 54px 54px; column-gap: 8px; row-gap: 3.600px; padding: 1px 0 0 18px; }
.pgrid button { height: 13px; background: #5d615d; color: #c8cac8; border-radius: 1px; font-size: 9.400px; line-height: 13px; }
.nrow { display: flex; align-items: center; gap: 2px; padding: 5px 0 0 17px; }
.nameinput { width: 104px; height: 15px; background: #5a5d5a; }
.swatch { width: 13px; height: 15px; background: #cc2b87; border: 1px solid #2f2f2f; margin-left: 1px; }

.trackrow { height: 20px; display: flex; align-items: center; padding-left: 3px; flex: none; }
.tgripv { width: 1px; height: 18px; margin: 0 6px 0 0; background: repeating-linear-gradient(#8a8d8a 0 1px, transparent 1px 3px); }
.tbtn { width: 10px; height: 12px; background: #4c4f4c; text-align: center; line-height: 11px; color: #ccc; font-size: 12px; }
.tslider { width: 98px; height: 12px; line-height: 12px; background: #5c605c; text-align: center; color: #c8cac8; margin: 0 1px; font-size: 9.400px; }

.timeline { height: 21px; display: flex; flex: none; border-top: 1px solid #111; box-sizing: border-box; }
.tlicon { width: 47px; padding: 3px 0 0 16px; box-sizing: border-box; background: #3b3e3b; }
.tlicon svg { width: 14px; height: 12px; }
.tlbar { position: relative; width: 1833px; background: #2b2b2b; }
.ticks { display: flex; height: 9px; padding-left: 7.500px; align-items: flex-start; }
.tick { width: 18.180px; flex: none; box-sizing: border-box; border-left: 1px solid #555; height: 3px; }
.tick.big { height: 9px; border-left-color: #777; }
.labels { display: flex; margin-left: -10.700px; color: #b0b2b0; font-size: 8.800px; margin-top: 2px; }
.labels span { width: 36.360px; flex: none; text-align: center; }
.thumb { position: absolute; left: 5px; top: 1px; width: 6px; height: 19px; background: #8a7e22; }

.status { height: 45px; display: flex; flex: none; align-items: stretch; background: #414441; }
.mini { width: 78px; margin: 5px 0 0 3px; height: 36px; display: flex; flex-direction: column; flex: none; border: 1px solid #aaa; box-sizing: border-box; }
.pink { height: 18px; background: #dcc6c6; border-bottom: 1px solid #eee; }
.white { flex: 1; background: #fff; color: #777; font: 9.500px/15px "Liberation Mono", monospace; padding-left: 3px; white-space: nowrap; overflow: hidden; }
.msgs { width: 1127px; flex: none; padding: 11px 0 0 7px; display: flex; flex-direction: column; gap: 11px; box-sizing: border-box; color: #dcdcdc; white-space: nowrap; font-size: 8.600px; }
.coords { width: 352px; flex: none; padding-top: 7px; box-sizing: border-box; }
.crow { display: flex; align-items: center; height: 14px; color: #bfc2bf; font-size: 8.800px; }
.crow > svg { width: 14px; height: 14px; }
.gap1 { margin-left: 9px; }
.gap2 { margin-left: 6px; }
.axl { width: 10px; margin-left: 7px; font-weight: 700; color: #aaa; font-size: 8.500px; }
.axl + .cinput { margin-left: 1px; }
.cinput { width: 46px; height: 13px; background: #5c5f5c; margin-right: 2px; }
.gridv { margin-left: 9px; }
.crow.tag { margin-top: 4px; padding-left: 245px; gap: 3px; height: 16px; }
.tagbtn { width: 17px; height: 16px; background: #5a8cca; border-radius: 2px; padding: 1px; box-sizing: border-box; }
.tagbtn svg { width: 15px; height: 14px; }
.play { width: 102px; flex: none; padding-top: 7px; box-sizing: border-box; }
.prow { display: flex; align-items: center; gap: 8px; padding-left: 2px; height: 14px; }
.prow svg { width: 12px; height: 12px; flex: none; }
.prow svg.big { width: 14px; height: 16px; }
.prow.low { margin-top: 4px; gap: 6px; height: 16px; }
.spin { width: 55px; height: 15px; background: #5c5f5c; display: flex; align-items: center; justify-content: space-between; padding: 0 2px 0 3px; box-sizing: border-box; color: #ccc; }
.spin i { font-size: 8px; }
.keybig { width: 34px; height: 34px; margin-top: 6px; background: #5a5d5a; padding: 3px; box-sizing: border-box; flex: none; border-radius: 2px; }
.keys { width: 131px; flex: none; margin-left: 4px; padding-top: 6px; box-sizing: border-box; }
.krow { display: flex; align-items: center; height: 15px; margin-bottom: 4px; gap: 4px; }
.kb { width: 36px; height: 15px; background: #5c5f5c; color: #c6c8c6; white-space: nowrap; font-size: 8.800px; border-radius: 1px; flex: none; }
.kdrop { width: 91px; height: 15px; background: #5c5f5c; display: flex; justify-content: space-between; align-items: center; padding: 0 4px; box-sizing: border-box; color: #c8cac8; font-size: 9.400px; }
.kf { width: 70px; height: 15px; background: #5c5f5c; color: #c8cac8; border-radius: 1px; margin-left: -1px; font-size: 9px; }
.nav { flex: 1; display: grid; grid-template-columns: repeat(4, 18.500px); row-gap: 5px; padding: 7px 0 0 12px; box-sizing: border-box; align-content: start; }
.nav svg { width: 14px; height: 14px; }

.winbar { height: 4px; background: #0c0c0c; position: relative; flex: none; display: flex; align-items: flex-end; }
.w1 { width: 344px; height: 2px; background: #f2f2f2; margin-left: 48px; }
.w2 { width: 48px; height: 2px; background: #555; margin-left: 295px; }

.fab { position: absolute; left: 18px; top: 946px; width: 26px; height: 26px; border-radius: 50%; background: #4a90d9; color: #fff; font-size: 17px; line-height: 25px; text-align: center; }

.taskbar { position: absolute; left: 784px; top: 965px; width: 354px; height: 23px; background: #111412; border-radius: 6px 6px 0 0; display: flex; align-items: center; padding-left: 7px; box-sizing: border-box; gap: 5px; }
.taskbar > svg { width: 15px; height: 16px; flex: none; }
.task { width: 110px; height: 23px; flex: none; display: flex; align-items: center; gap: 5px; padding-left: 4px; box-sizing: border-box; background: linear-gradient(#2b2d2b, #111); border-left: 1px solid #3a3c3a; color: #e2e2e2; font-size: 9.200px; }
.task.on { background: linear-gradient(#5a5d5a, #333); margin-left: 1px; margin-right: -5px; }
.three { width: 12px; height: 16px; background: #e8f5f5; color: #127f7f; border: 1px solid #2bb9b9; box-sizing: border-box; font-weight: 700; font-size: 10px; text-align: center; line-height: 14px; flex: none; }
.tname { white-space: nowrap; }
.tname.mid { margin-left: 30px; }
.nv { margin-left: 18px; }
</style>
